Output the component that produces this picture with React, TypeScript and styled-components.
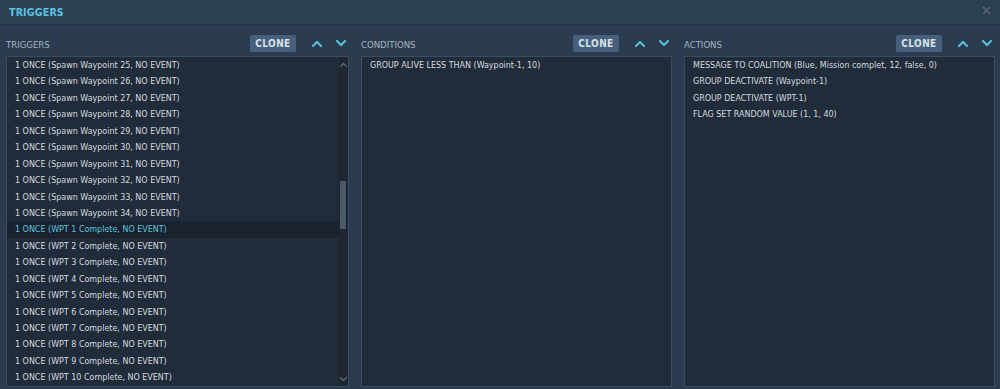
import React from 'react'
import styled, { createGlobalStyle } from 'styled-components'

const GlobalStyle = createGlobalStyle`
  html, body {
    margin: 0;
    padding: 0;
    background: #2b3c50;
  }
  * {
    box-sizing: border-box;
  }
`

const StyledWindow = styled.div`
  width: 1000px;
  height: 389px;
  background: #2b3c50;
  font-family: "DejaVu Sans Condensed", "DejaVu Sans", sans-serif;
  display: flex;
  flex-direction: column;
  overflow: hidden;
`

const StyledTitleBar = styled.div`
  height: 25px;
  display: flex;
  align-items: center;
  justify-content: space-between;
  padding: 0 7px 1px 9px;
  background: #2d3f53;
  border-bottom: 1px solid #24344a;
`

const StyledTitle = styled.div`
  color: #5cc4e2;
  font-weight: bold;
  font-size: 10.5px;
  letter-spacing: 0.2px;
  padding-top: 1px;
`

const StyledClose = styled.button`
  width: 14px;
  height: 14px;
  padding: 0;
  border: none;
  background: transparent;
  display: flex;
  align-items: center;
  justify-content: center;
  margin-top: -2px;
`

const StyledColumns = styled.div`
  display: grid;
  grid-template-columns: 343px 311px 311px;
  column-gap: 12px;
  padding: 10px 0 0 6px;
  flex: 1;
`

const StyledColumn = styled.div`
  display: flex;
  flex-direction: column;
`

const StyledHeader = styled.div`
  height: 17px;
  display: flex;
  align-items: center;
  margin-bottom: 4px;
`

const StyledLabel = styled.div`
  flex: 1;
  color: #a8b3be;
  font-size: 9.5px;
  padding-top: 1px;
`

const StyledCloneButton = styled.button`
  width: 46px;
  height: 17px;
  padding: 0;
  border: none;
  border-radius: 2px;
  background: #465f7b;
  color: #d8e0e8;
  font-family: inherit;
  font-weight: bold;
  font-size: 10px;
  letter-spacing: 0.4px;
  margin-right: 13px;
`

const StyledArrowButton = styled.button`
  width: 16px;
  height: 17px;
  padding: 0;
  border: none;
  background: transparent;
  display: flex;
  align-items: center;
  justify-content: center;
  & + & {
    margin-left: 8px;
  }
`

const StyledPanel = styled.div`
  height: 331px;
  background: #212c3b;
  border: 1px solid #394c62;
  display: flex;
  overflow: hidden;
`

const StyledList = styled.div`
  flex: 1;
  display: flex;
  flex-direction: column;
`

const StyledRow = styled.div<{ $selected?: boolean }>`
  height: 16.45px;
  line-height: 16.45px;
  padding-left: 8px;
  font-size: 8.9px;
  white-space: nowrap;
  color: ${(p) => (p.$selected ? '#5ec3dd' : '#d4d9df')};
  background: ${(p) => (p.$selected ? '#19222e' : 'transparent')};
`

const StyledScrollbar = styled.div`
  width: 9px;
  background: #1e2631;
  display: flex;
  flex-direction: column;
  align-items: center;
  justify-content: space-between;
  padding: 5px 0 4px;
  position: relative;
`

const StyledThumb = styled.div<{ $top: number; $size: number }>`
  position: absolute;
  left: 1px;
  width: 6px;
  top: ${(p) => p.$top}px;
  height: ${(p) => p.$size}px;
  background: #4a5a6b;
`

const Chevron = ({ up, color, size = 10 }: { up?: boolean; color: string; size?: number }) => (
  <svg width={size} height={size * 0.7} viewBox="0 0 10 7">
    <polyline
      points={up ? '1,6 5,2 9,6' : '1,1 5,5 9,1'}
      fill="none"
      stroke={color}
      strokeWidth={2}
      strokeLinecap="square"
    />
  </svg>
)

const triggers = [
  ...[25, 26, 27, 28, 29, 30, 31, 32, 33, 34].map((n) => `1 ONCE (Spawn Waypoint ${n}, NO EVENT)`),
  ...[1, 2, 3, 4, 5, 6, 7, 8, 9, 10].map((n) => `1 ONCE (WPT ${n} Complete, NO EVENT)`),
]

const conditions = ['GROUP ALIVE LESS THAN (Waypoint-1, 10)']

const actions = [
  'MESSAGE TO COALITION (Blue, Mission complet, 12, false, 0)',
  'GROUP DEACTIVATE (Waypoint-1)',
  'GROUP DEACTIVATE (WPT-1)',
  'FLAG SET RANDOM VALUE (1, 1, 40)',
]

const Column = ({ label, items, selected, scroll }: {
  label: string
  items: string[]
  selected?: number
  scroll?: boolean
}) => (
  <StyledColumn>
    <StyledHeader>
      <StyledLabel>{label}</StyledLabel>
      <StyledCloneButton>CLONE</StyledCloneButton>
      <StyledArrowButton><Chevron up color="#5bbfdc" /></StyledArrowButton>
      <StyledArrowButton><Chevron color="#5bbfdc" /></StyledArrowButton>
    </StyledHeader>
    <StyledPanel>
      <StyledList>
        {items.map((item, i) => (
          <StyledRow key={item} $selected={i === selected}>{item}</StyledRow>
        ))}
      </StyledList>
      {scroll && (
        <StyledScrollbar>
          <Chevron up color="#5a6776" size={7} />
          <StyledThumb $top={124} $size={48} />
          <Chevron color="#5a6776" size={7} />
        </StyledScrollbar>
      )}
    </StyledPanel>
  </StyledColumn>
)

const App = () => (
  <StyledWindow>
    <GlobalStyle />
    <StyledTitleBar>
      <StyledTitle>TRIGGERS</StyledTitle>
      <StyledClose>
        <svg width="9" height="9" viewBox="0 0 9 9">
          <path d="M1 1 L8 8 M8 1 L1 8" stroke="#5b6b7c" strokeWidth="1.3" />
        </svg>
      </StyledClose>
    </StyledTitleBar>
    <StyledColumns>
      <Column label="TRIGGERS" items={triggers} selected={10} scroll />
      <Column label="CONDITIONS" items={conditions} />
      <Column label="ACTIONS" items={actions} />
    </StyledColumns>
  </StyledWindow>
)

export default App
